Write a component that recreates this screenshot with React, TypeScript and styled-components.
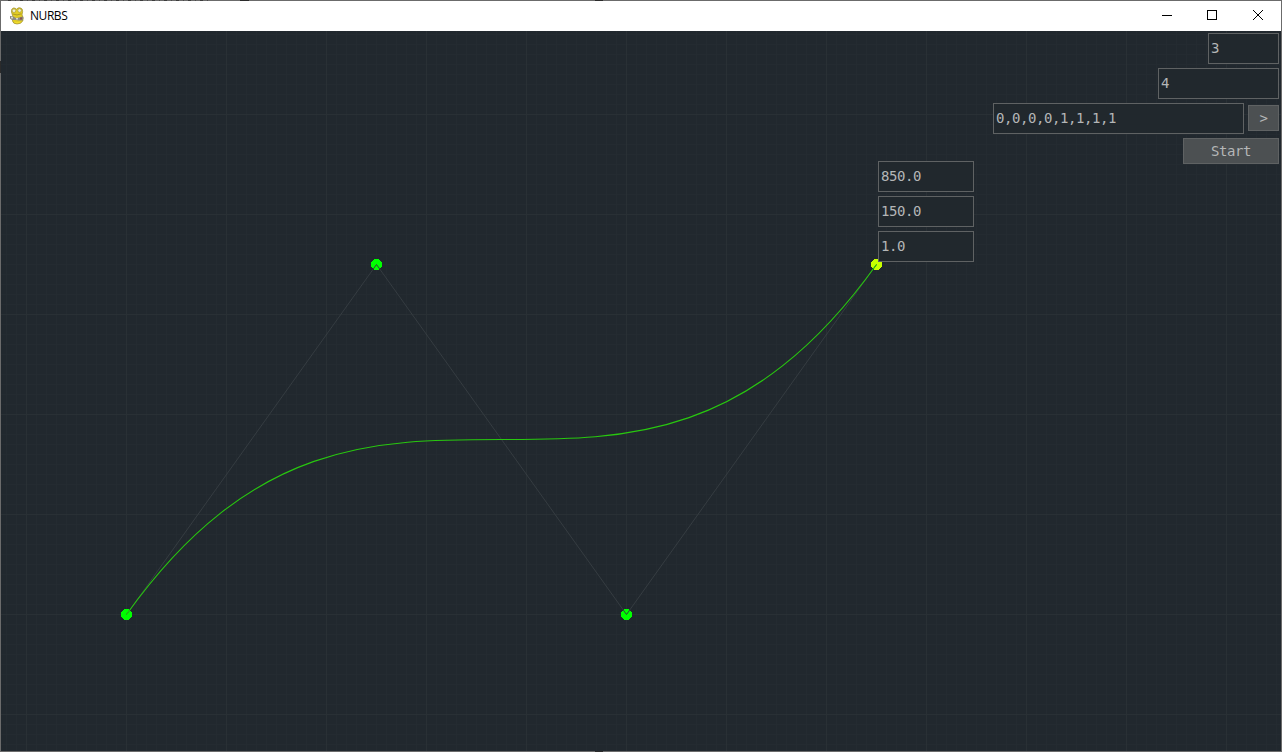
import React from "react";
import styled, { createGlobalStyle } from "styled-components";

const GlobalStyle = createGlobalStyle`
  * { box-sizing: border-box; }
  body { margin: 0; overflow: hidden; background: #6b6b6b; }
`;

const Window = styled.div`
  width: 1282px;
  height: 752px;
  display: flex;
  flex-direction: column;
  padding: 1px;
  background-color: #6b6b6b;
  background-image:
    repeating-linear-gradient(90deg, transparent 0 4px, #3c3c3c 4px 7px, transparent 7px 11px, #4a4a4a 11px 12px),
    linear-gradient(#2b2b2b, #2b2b2b),
    linear-gradient(#2b2b2b, #2b2b2b),
    linear-gradient(#2b2b2b, #2b2b2b),
    linear-gradient(#2b2b2b, #2b2b2b);
  background-size: 205px 1px, 9px 1px, 8px 1px, 8px 1px, 1px 12px;
  background-position: 4px 0, 240px 0, 595px 0, 595px 751px, 0 61px;
  background-repeat: no-repeat;
`;

const TitleBar = styled.header`
  height: 30px;
  flex: none;
  display: flex;
  align-items: center;
  background: #fff;
  padding-left: 8px;
`;

const Title = styled.span`
  flex: 1;
  margin-left: 5px;
  color: #000;
  font: 12px/16px "Open Sans", "Noto Sans", sans-serif;
  letter-spacing: -0.45px;
`;

const WindowButton = styled.button`
  width: 46px;
  height: 30px;
  padding: 0 0 2px;
  border: 0;
  background: none;
  display: flex;
  align-items: center;
  justify-content: center;
`;

const Canvas = styled.main`
  position: relative;
  flex: 1;
  background-color: #21282e;
  background-image:
    linear-gradient(90deg, #293035 1px, transparent 1px),
    linear-gradient(#293035 1px, transparent 1px),
    linear-gradient(90deg, #242b31 1px, transparent 1px),
    linear-gradient(#242b31 1px, transparent 1px);
  background-size: 100px 100px, 100px 100px, 10px 10px, 10px 10px;
  background-position: 25px 0, 0 83px, 5px 0, 0 3px;
`;

const Plot = styled.svg`
  position: absolute;
  inset: 0;
`;

const Controls = styled.div`
  position: relative;
  display: flex;
  flex-direction: column;
  align-items: flex-end;
  gap: 4px;
  padding: 2px 2px 0 0;
`;

const Row = styled.div`
  display: flex;
  align-items: flex-start;
  gap: 4px;

  button { margin-top: 2px; }
`;

const Entry = styled.div<{ $width: number }>`
  width: ${(p) => p.$width}px;
  height: 31px;
  padding-left: 2px;
  border: 1px solid #5f6263;
  background: #21282d;
  color: #b4b6b7;
  font: 14px/29px "DejaVu Sans Mono", monospace;
  letter-spacing: -0.43px;
  white-space: pre;
`;

const ActionButton = styled.button<{ $width: number }>`
  width: ${(p) => p.$width}px;
  height: 26px;
  padding: 0;
  border: 1px solid #5f6263;
  background: #4c5052;
  color: #b4b6b7;
  font: 14px/24px "DejaVu Sans Mono", monospace;
  letter-spacing: -0.43px;
  text-align: center;
`;

const PointEditor = styled.div`
  position: absolute;
  left: 877px;
  top: 130px;
  display: flex;
  flex-direction: column;
  gap: 4px;
`;

const points = [
  { x: 125, y: 583, color: "#00ff00" },
  { x: 375, y: 233, color: "#00ff00" },
  { x: 625, y: 583, color: "#00ff00" },
  { x: 875, y: 233, color: "#c8ff00" },
];

const SnakeIcon = () => (
  <svg width="16" height="18" viewBox="0 0 16 18">
    <path d="M3.5 8.5 L2.5 5 Q2 1.5 4.5 1 Q6.2 .8 7.5 2.2 Q9 .4 11 .8 Q13.8 1.2 13.6 4.5 L13 8 Q14.8 9.5 13.8 14 Q12 17 8 17 Q4 16.8 3.5 14 Z" fill="#e2cd25" stroke="#9c8d2c" strokeWidth=".7" />
    <circle cx="5" cy="3.7" r="1.8" fill="#efedd2" stroke="#a49a38" strokeWidth=".6" />
    <circle cx="10.6" cy="3.5" r="1.8" fill="#efedd2" stroke="#a49a38" strokeWidth=".6" />
    <path d="M3.8 7 Q8 9 12.3 6.8" fill="none" stroke="#a08d20" strokeWidth=".8" />
    <path d="M1 9 L4 9.3 L7 11 L10 10.5 L13.5 9.5 L14.5 11 L13.5 13.5 L10 13.5 L7 13 L3 13 L1 11.5 Z" fill="#8b8a80" />
    <path d="M2 9.8h2v1.8h-2z M7 11h2v1.5h-2z" fill="#d5d5cd" />
    <path d="M11 10.5h2v2h-2z" fill="#8e5448" />
    <path d="M5.5 15 Q8 16.2 11 15" fill="none" stroke="#f0dc2e" strokeWidth="1.2" />
  </svg>
);

export default function App() {
  return (
    <>
      <GlobalStyle />
      <Window>
        <TitleBar>
          <SnakeIcon />
          <Title>NURBS</Title>
          <WindowButton aria-label="Minimize">
            <svg width="12" height="10"><path d="M2 5.5h10" stroke="#000" /></svg>
          </WindowButton>
          <WindowButton aria-label="Maximize">
            <svg width="10" height="10"><rect x=".5" y=".5" width="9" height="9" fill="none" stroke="#000" /></svg>
          </WindowButton>
          <WindowButton aria-label="Close">
            <svg width="10" height="10"><path d="M0 0L10 10M10 0L0 10" stroke="#000" /></svg>
          </WindowButton>
        </TitleBar>
        <Canvas>
          <Plot width="1280" height="720">
            {points.map((p) => (
              <circle key={p.x} cx={p.x + 0.5} cy={p.y + 0.5} r="5.5" fill={p.color} shapeRendering="crispEdges" />
            ))}
            <polyline
              points={points.map((p) => `${p.x + 0.5},${p.y + 0.5}`).join(" ")}
              fill="none"
              stroke="#353c41"
            />
            <path d="M125.5 583.5C375.5 233.5 625.5 583.5 875.5 233.5" fill="none" stroke="#28c80f" strokeWidth="1.1" />
          </Plot>
          <Controls>
            <Entry $width={71}>3</Entry>
            <Entry $width={121}>4</Entry>
            <Row>
              <Entry $width={251}>0,0,0,0,1,1,1,1</Entry>
              <ActionButton $width={31}>&gt;</ActionButton>
            </Row>
            <ActionButton $width={96}>Start</ActionButton>
          </Controls>
          <PointEditor>
            <Entry $width={96}>850.0</Entry>
            <Entry $width={96}>150.0</Entry>
            <Entry $width={96}>1.0</Entry>
          </PointEditor>
        </Canvas>
      </Window>
    </>
  );
}
